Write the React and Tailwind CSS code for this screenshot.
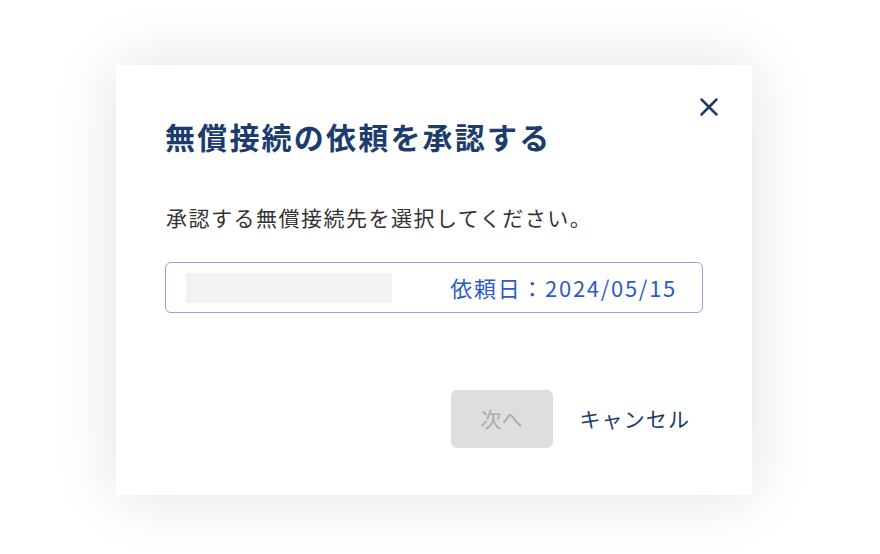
import { X } from "lucide-react";

const font = { fontFamily: '"Noto Sans CJK JP", "Noto Sans", sans-serif' };

const App = () => {
  return (
    <div
      style={font}
      className="min-h-[554px] w-[880px] bg-white pt-[65px] pl-[116px]"
    >
      <div className="relative w-[636px] h-[430px] bg-white shadow-[0_0_60px_rgba(0,0,0,0.12)] px-[49px] pt-[50px]">
        <button className="absolute top-[20px] right-[21px] w-[44px] h-[44px] flex items-center justify-center text-[#1d3c6e]">
          <X size={30} strokeWidth={2} />
        </button>
        <h2 className="text-[30px] leading-[42px] font-bold text-[#1d3c6e] tracking-[2.2px]">
          無償接続の依頼を承認する
        </h2>
        <p className="mt-[45px] text-[21px] leading-[30px] text-[#333333] pl-px tracking-[1.5px]">
          承認する無償接続先を選択してください。
        </p>
        <div className="mt-[30px] h-[51px] border border-[#8aa4e6] rounded-[6px] flex items-center justify-between pl-[20px] pr-[25px]">
          <div className="w-[206px] h-[30px] bg-[#f2f2f2]"></div>
          <span className="text-[22px] text-[#2f5bc8] tracking-[1.7px]">
            依頼日：2024/05/15
          </span>
        </div>
        <div className="mt-[77px] flex items-center justify-end gap-[27px] pr-[13px]">
          <button className="w-[102px] h-[58px] rounded-[6px] bg-[#dedede] text-[21px] text-[#ababab]">
            次へ
          </button>
          <button className="text-[21px] text-[#1d3c6e] tracking-[1.1px]">
            キャンセル
          </button>
        </div>
      </div>
    </div>
  );
};

export default App;
